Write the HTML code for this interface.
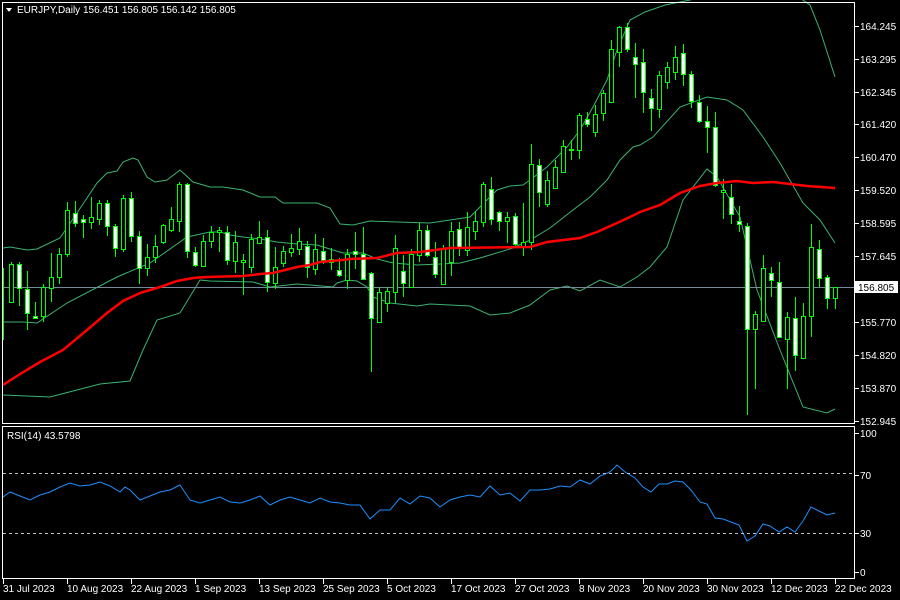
<!DOCTYPE html>
<html><head><meta charset="utf-8"><style>
html,body{margin:0;padding:0;background:#000;width:900px;height:600px;overflow:hidden}
svg{display:block}
text{font-family:"Liberation Sans",sans-serif;font-size:10px;fill:#fff}
</style></head><body>
<svg id="s" width="900" height="600" viewBox="0 0 900 600" shape-rendering="crispEdges">
<rect width="900" height="600" fill="#000"/>
<g id="bands" fill="none" stroke="#3cb371" stroke-width="1" shape-rendering="auto"></g>
<line x1="3" y1="287.5" x2="854" y2="287.5" stroke="#778899"/>
<g id="cand"></g>
<polyline id="ma" fill="none" stroke="#ff0000" stroke-width="2.5" shape-rendering="auto"/>
<polyline id="rsi" fill="none" stroke="#1e90ff" stroke-width="1" shape-rendering="auto"/>
<line x1="3" y1="473.5" x2="854" y2="473.5" stroke="#c0c0c0" stroke-dasharray="3,3"/>
<line x1="3" y1="533.5" x2="854" y2="533.5" stroke="#c0c0c0" stroke-dasharray="3,3"/>
<rect x="2.5" y="2.5" width="852" height="421" fill="none" stroke="#fff"/>
<rect x="2.5" y="426.5" width="852" height="152" fill="none" stroke="#fff"/>
<g id="axis"></g>
<polygon points="6,8 12,8 9,12" fill="#fff"/>
<text x="17" y="13">EURJPY,Daily  156.451 156.805 156.142 156.805</text>
<text x="7" y="439">RSI(14) 43.5798</text>
<rect x="855" y="281" width="43" height="12" fill="#fff"/>
<text x="858" y="291" style="fill:#000">156.805</text>
</svg>
<script>
var NS="http://www.w3.org/2000/svg";
function el(p,t,a){var e=document.createElementNS(NS,t);for(var k in a)e.setAttribute(k,a[k]);p.appendChild(e);return e;}
function pts(a){return a.map(function(p){return p[0]+","+p[1]}).join(" ");}
var C=[
[11,262,303,264,302,0],[19,262,306,264,288,1],[27,271,330,289,313,1],[35,302,318,316,318,1],[43,284,322,287,316,0],[51,253,302,277,288,0],[59,248,284,254,277,0],[67,202,257,210,254,0],[75,201,227,213,223,1],[83,215,238,219,222,1],[91,197,229,217,222,0],[99,200,225,203,219,0],[107,200,236,203,226,1],[115,224,257,226,248,1],[123,195,252,198,249,0],[131,192,242,198,236,1],[139,231,284,236,268,1],[147,244,276,257,268,0],[155,235,263,246,257,0],[163,224,244,225,242,0],[171,207,232,219,230,0],[179,182,232,184,221,0],[187,183,258,184,251,1],[195,247,267,252,265,1],[203,235,267,241,266,0],[211,226,248,232,241,0],
[219,227,252,230,232,0],[227,226,265,232,260,1],[235,231,273,242,261,0],[243,254,295,260,262,0],[251,234,273,239,267,0],[259,221,244,237,243,0],[267,230,292,237,282,1],[275,247,289,267,283,0],[283,246,267,251,263,0],[291,234,257,248,252,0],[299,228,255,241,249,0],[307,241,278,246,267,1],[315,234,275,249,269,0],[323,238,264,251,260,1],[331,248,270,259,262,0],[339,258,277,270,275,1],[347,249,289,254,280,0],[355,232,269,251,254,1],[363,227,280,254,279,1],[371,272,372,273,318,1],[379,287,322,292,322,0],[387,287,312,291,303,0],[395,235,303,248,292,0],[403,255,297,271,283,1],[411,249,288,254,287,0],[419,223,262,230,255,0],[427,225,257,230,255,1],[435,242,278,257,274,1],
[443,245,285,248,284,0],[451,222,276,231,262,0],[459,222,256,229,247,1],[467,212,256,227,250,0],[475,212,240,221,231,0],[483,182,227,184,222,0],[491,177,225,189,219,1],[499,211,231,212,221,1],[507,212,243,217,221,0],[515,213,247,216,244,1],[523,203,256,242,246,0],[531,144,250,164,242,0],[539,159,207,165,192,1],[547,171,207,180,204,0],[555,160,189,167,188,0],[563,140,173,146,172,0],[571,140,160,149,150,0],[579,113,159,115,150,0],[587,112,127,119,124,1],[595,105,137,114,132,0],[603,90,121,93,113,0],[611,40,103,49,102,0],[619,26,67,27,52,0],[627,23,52,27,49,1],[635,43,98,57,64,1],[643,49,113,62,92,1],
[651,89,131,98,108,1],[659,71,118,75,109,0],[667,62,89,67,82,0],[675,46,80,57,72,0],[683,44,86,53,74,1],[691,71,108,74,101,1],[699,95,123,102,121,1],[707,106,153,121,127,1],[715,112,187,127,185,1],[723,179,219,190,192,0],[731,184,224,197,214,1],[739,206,232,221,224,1],[747,223,415,226,329,1],[755,311,389,314,329,0],[763,255,321,268,321,0],[771,267,297,273,280,1],[779,262,337,282,337,1],[787,312,389,317,339,0],[795,297,371,318,355,1],[803,303,359,316,358,0],[811,224,337,247,316,0],[819,240,287,249,278,1],[827,275,309,277,298,1],[835,287,309,287,298,0]
];
var g=document.getElementById("cand");
el(g,"line",{x1:3.5,y1:268,x2:3.5,y2:340,stroke:"#00ff00"});
C.forEach(function(c){
 var x=c[0];
 el(g,"line",{x1:x+0.5,y1:c[1],x2:x+0.5,y2:c[2],stroke:"#00ff00"});
 var h=Math.max(1,c[4]-c[3]);
 el(g,"rect",{x:x-1.5,y:c[3]+0.5,width:4,height:h,fill:c[5]?"#fff":"#000",stroke:"#00ff00"});
});
var bands=document.getElementById("bands");
var up=[[3,248],[10,247],[27,250],[37,249],[60,238],[77,213],[97,183],[107,173],[117,171],[123,162],[133,158],[138,160],[147,177],[155,182],[167,180],[180,170],[193,182],[210,187],[223,187],[243,190],[260,197],[275,197],[283,203],[317,203],[330,208],[340,224],[353,225],[370,221],[397,222],[430,223],[450,220],[470,217],[497,190],[510,186],[523,185],[530,180],[547,167],[567,147],[580,130],[593,107],[607,80],[617,50],[630,20],[645,12],[665,5],[690,0],[720,-8],[760,-10],[800,-2],[810,5],[820,30],[828,55],[835,77]];
var mid=[[3,322],[23,322],[37,323],[67,303],[117,277],[150,263],[187,237],[210,232],[220,232],[230,235],[243,237],[260,239],[277,242],[297,244],[317,245],[333,250],[343,253],[363,253],[377,259],[393,263],[417,265],[440,264],[460,263],[480,258],[513,248],[530,240],[550,228],[573,210],[590,197],[607,180],[620,160],[633,147],[640,145],[653,137],[680,107],[707,97],[727,100],[743,110],[763,137],[780,163],[803,203],[820,220],[835,243]];
var lo=[[3,395],[50,397],[100,384],[130,381],[143,350],[157,320],[180,313],[200,280],[210,281],[253,282],[270,287],[297,284],[310,285],[333,287],[337,283],[347,280],[357,281],[367,287],[373,297],[390,303],[417,306],[430,304],[470,306],[490,315],[510,313],[530,305],[550,290],[567,286],[580,291],[600,280],[620,287],[637,277],[650,267],[667,247],[683,200],[707,169],[717,177],[740,217],[757,290],[780,350],[803,407],[827,413],[835,409]];
[up,mid,lo].forEach(function(a){el(bands,"polyline",{points:pts(a)});});
document.getElementById("ma").setAttribute("points",pts([[3,385],[20,374],[40,362],[63,350],[87,330],[107,313],[123,301],[140,293],[160,287],[177,281],[193,278],[207,277],[243,276],[260,274],[273,273],[297,267],[310,265],[320,262],[343,260],[350,259],[377,258],[397,253],[420,252],[450,248],[530,247],[547,242],[580,238],[597,232],[617,223],[630,217],[640,212],[660,205],[680,193],[700,186],[717,183],[737,181],[753,183],[773,182],[790,184],[807,186],[835,188]]));
document.getElementById("rsi").setAttribute("points",pts([[3,497],[10,492],[20,496],[30,500],[40,495],[50,492],[60,487],[70,483],[80,486],[90,485],[100,482],[110,486],[120,492],[125,487],[130,490],[140,500],[150,496],[160,492],[170,490],[180,485],[190,500],[200,503],[210,500],[220,497],[230,502],[240,503],[250,500],[260,496],[270,505],[280,500],[290,497],[300,500],[310,503],[320,498],[330,502],[340,503],[350,505],[360,505],[370,519],[380,510],[390,510],[400,498],[410,504],[420,496],[430,498],[440,507],[450,500],[460,497],[470,495],[480,497],[490,486],[500,495],[510,493],[520,501],[530,490],[540,490],[550,489],[560,486],[570,487],[580,480],[590,484],[600,476],[610,472],[617,465],[625,472],[635,478],[643,487],[651,492],[659,484],[667,484],[675,481],[683,482],[691,490],[700,502],[707,504],[715,518],[723,519],[731,522],[739,525],[747,541],[755,536],[763,524],[770,526],[779,532],[787,527],[795,532],[803,521],[811,507],[819,511],[827,515],[835,513]]));
var ax=document.getElementById("axis");
[["164.245",26],["163.295",59],["162.345",92],["161.420",124],["160.470",157],["159.520",190],["158.595",223],["157.645",256],["155.770",322],["154.820",355],["153.870",388],["152.945",421]].forEach(function(p){
 el(ax,"line",{x1:855,y1:p[1]+0.5,x2:859,y2:p[1]+0.5,stroke:"#fff"});
 var t=el(ax,"text",{x:860,y:p[1]+4});t.textContent=p[0];
});
[["100",433],["70",475],["30",533],["0",572]].forEach(function(p){
 el(ax,"line",{x1:855,y1:p[1]+0.5,x2:859,y2:p[1]+0.5,stroke:"#fff"});
 var t=el(ax,"text",{x:860,y:p[1]+4});t.textContent=p[0];
});
[["31 Jul 2023",3],["10 Aug 2023",67],["22 Aug 2023",131],["1 Sep 2023",195],["13 Sep 2023",259],["25 Sep 2023",323],["5 Oct 2023",387],["17 Oct 2023",451],["27 Oct 2023",515],["8 Nov 2023",579],["20 Nov 2023",643],["30 Nov 2023",707],["12 Dec 2023",771],["22 Dec 2023",835]].forEach(function(p){
 el(ax,"line",{x1:p[1]+0.5,y1:579,x2:p[1]+0.5,y2:584,stroke:"#fff"});
 var t=el(ax,"text",{x:p[1],y:592});t.textContent=p[0];
});
</script>
</body></html>
